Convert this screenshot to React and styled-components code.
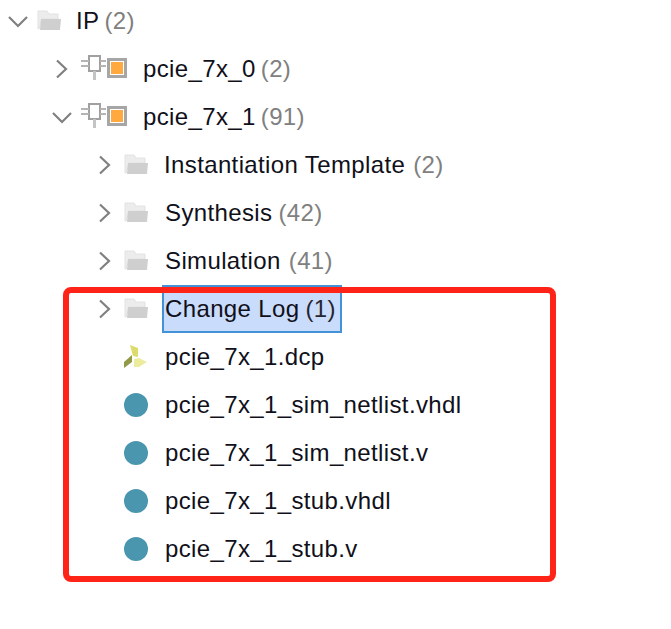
import React from 'react'
import styled, { createGlobalStyle } from 'styled-components'

const GlobalStyle = createGlobalStyle`
  html, body {
    margin: 0;
    background: #fff;
  }
`

const Page = styled.div`
  position: relative;
  width: 671px;
  height: 629px;
  overflow: hidden;
  font-family: "Liberation Sans", Arial, sans-serif;
  font-size: 24px;
  letter-spacing: 0.37px;
  color: #10101a;
`

const Tree = styled.div`
  display: flex;
  flex-direction: column;
  margin-top: -3px;
`

const Row = styled.div`
  display: flex;
  align-items: center;
  height: 48px;
  padding-left: ${({ $indent }) => $indent}px;
`

const ChevronSlot = styled.span`
  display: flex;
  justify-content: center;
  align-items: center;
  width: 24px;
  height: 24px;
  flex: none;
`

const IconSlot = styled.span`
  display: flex;
  align-items: center;
  flex: none;
  width: ${({ $width }) => $width}px;
  margin-left: 7px;
`

const Label = styled.span`
  display: flex;
  align-items: center;
  box-sizing: border-box;
  height: 48px;
  margin-left: ${({ $gap }) => $gap}px;
  padding: 0 3px;
  white-space: pre;
  ${({ $selected }) =>
    $selected &&
    `
    background: #c9dcfb;
    border: 2px solid #4391d6;
    padding: 0 4px 0 1px;
  `}
`

const Count = styled.span`
  color: ${({ $selected }) => ($selected ? '#26262e' : '#808080')};
  margin-left: ${({ $gap }) => $gap}px;
`

const Callout = styled.div`
  position: absolute;
  left: 63px;
  top: 287px;
  width: 493px;
  height: 295px;
  box-sizing: border-box;
  border: 6px solid #ff2318;
  border-radius: 8px;
  pointer-events: none;
`

const Chevron = ({ open }) => (
  <svg width="24" height="24" viewBox="0 0 24 24" fill="none" stroke="#808080" strokeWidth="2.2">
    {open ? <path d="M3 8l9 9 9-9" /> : <path d="M7 3.5l9 8.5-9 8.5" />}
  </svg>
)

const FolderIcon = () => (
  <svg width="24" height="22" viewBox="0 0 24 22">
    <path d="M1 1h9l2 3h9v5H5L2 19H1z" fill="#ececec" stroke="#e2e2e2" />
    <path d="M4 9h20l-1 11H3z" fill="#cfcfcf" />
  </svg>
)

const ChipIcon = () => (
  <svg width="46" height="30" viewBox="0 0 46 30" fill="none">
    <rect x="8" y="2" width="11" height="15" stroke="#a0a0a0" strokeWidth="2" fill="#fff" />
    <path d="M0 7h8M0 12h8M19 7h6M19 12h6" stroke="#b4b4b4" strokeWidth="2" />
    <path d="M13.5 17v9" stroke="#c4c4c4" strokeWidth="3" />
    <rect x="27.5" y="5.5" width="17" height="17" stroke="#a6a6a6" strokeWidth="3" fill="#fff" />
    <rect x="30" y="8" width="12" height="12" fill="#ffa93f" />
  </svg>
)

const LeafIcon = () => (
  <svg width="24" height="24" viewBox="0 0 24 24">
    <path d="M6 0l8 3v9l-5-1z" fill="#dcdc6a" />
    <path d="M8 10L0 17v6l8-6z" fill="#929a45" />
    <path d="M10 14l5-1 8 4-8 5h-5z" fill="#ecec9e" />
  </svg>
)

const Dot = styled.span`
  display: block;
  width: 24px;
  height: 24px;
  border-radius: 50%;
  background: #4b96af;
`

const rows = [
  { indent: 6, arrow: 'open', icon: 'folder', name: 'IP', count: 2, gap: 12, countGap: 5 },
  { indent: 50, arrow: 'closed', icon: 'chip', name: 'pcie_7x_0', count: 2, gap: 13, countGap: 5 },
  { indent: 50, arrow: 'open', icon: 'chip', name: 'pcie_7x_1', count: 91, gap: 13, countGap: 5 },
  { indent: 93, arrow: 'closed', icon: 'folder', name: 'Instantiation Template', count: 2, gap: 13, countGap: 8 },
  { indent: 93, arrow: 'closed', icon: 'folder', name: 'Synthesis', count: 42, gap: 14, countGap: 6 },
  { indent: 93, arrow: 'closed', icon: 'folder', name: 'Simulation', count: 41, gap: 14, countGap: 8 },
  { indent: 93, arrow: 'closed', icon: 'folder', name: 'Change Log', count: 1, gap: 14, countGap: 6, selected: true },
  { indent: 93, icon: 'leaf', name: 'pcie_7x_1.dcp', gap: 14 },
  { indent: 93, icon: 'dot', name: 'pcie_7x_1_sim_netlist.vhdl', gap: 14 },
  { indent: 93, icon: 'dot', name: 'pcie_7x_1_sim_netlist.v', gap: 14 },
  { indent: 93, icon: 'dot', name: 'pcie_7x_1_stub.vhdl', gap: 14 },
  { indent: 93, icon: 'dot', name: 'pcie_7x_1_stub.v', gap: 14 },
]

const icons = {
  folder: <FolderIcon />,
  chip: <ChipIcon />,
  leaf: <LeafIcon />,
  dot: <Dot />,
}

const App = () => (
  <Page>
    <GlobalStyle />
    <Tree>
      {rows.map((row) => (
        <Row key={row.name} $indent={row.indent}>
          <ChevronSlot>{row.arrow && <Chevron open={row.arrow === 'open'} />}</ChevronSlot>
          <IconSlot $width={row.icon === 'chip' ? 46 : 24}>{icons[row.icon]}</IconSlot>
          <Label $gap={row.gap} $selected={row.selected}>
            {row.name}
            {row.count !== undefined && (
              <Count $gap={row.countGap} $selected={row.selected}>
                ({row.count})
              </Count>
            )}
          </Label>
        </Row>
      ))}
    </Tree>
    <Callout />
  </Page>
)

export default App
